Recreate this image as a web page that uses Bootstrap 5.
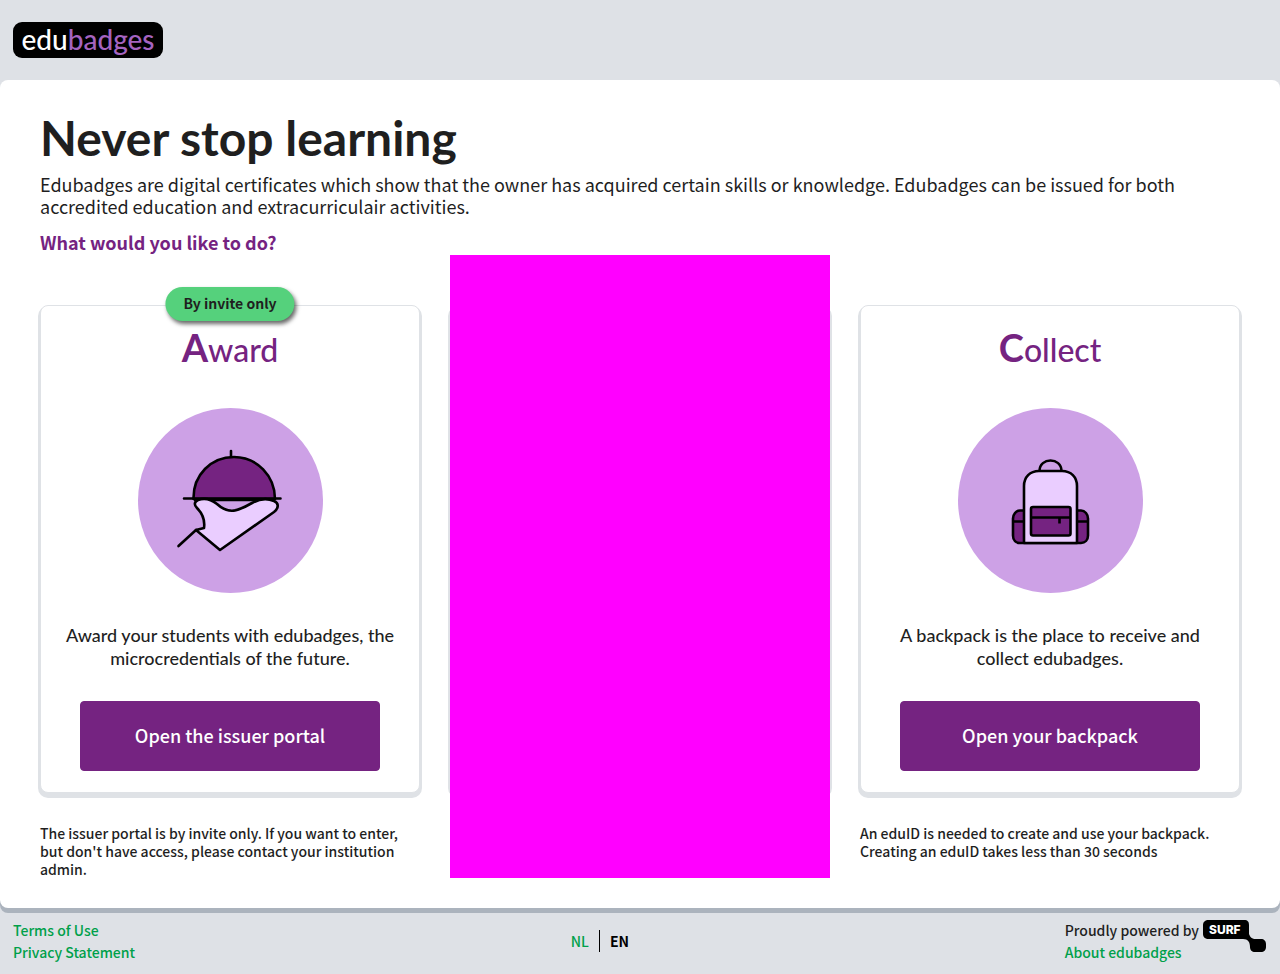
<!DOCTYPE html>
<html lang="en">
<head>
<meta charset="utf-8">
<meta name="viewport" content="width=device-width, initial-scale=1">
<title>Edubadges</title>
<link href="https://cdn.jsdelivr.net/npm/bootstrap@5.3.0/dist/css/bootstrap.min.css" rel="stylesheet">
<style>
:root { --edu-purple: #752381; --edu-line: #dfe2e6; --edu-green: #00a04a; }
body { background: #dee1e6; color: #1f1f1f; font-family: "Noto Sans CJK SC", "Open Sans", sans-serif; font-size: 14px; line-height: 22px; font-weight: 500; }
a { color: var(--edu-green); text-decoration: none; }
.top-bar { height: 80px; padding: 0 13px; }
.brand-mark { width: 150px; height: 36px; border-radius: 9px; background: #000; color: #fff; font-family: Lato, sans-serif; font-size: 28px; line-height: 34px; }
.brand-mark span { color: #a564c0; }
.sheet { border-radius: 8px; box-shadow: 0 5px 0 #abb3bd; padding: 29px 40px 30px; }
h1 { font-family: Lato, sans-serif; font-weight: 700; font-size: 48px; line-height: 58px; margin-bottom: 6px; }
.intro { font-size: 18px; line-height: 22px; font-weight: 400; margin-bottom: 14px; }
.question { font-size: 18px; line-height: 22px; font-weight: 700; color: var(--edu-purple); margin-bottom: 2px; }
.choices { --bs-gutter-x: 30px; }
.choice { position: relative; margin-top: 50px; height: 488px; border: 1px solid var(--edu-line); border-radius: 8px; box-shadow: 0 3px 0 2px var(--edu-line); background: #fff; font-family: Lato, sans-serif; padding: 17px 20px 21px; }
.invite { top: -19px; height: 34px; border-radius: 17px; padding: 5px 18px; background: #55d17c; font: 700 14px/22px "Noto Sans CJK SC", sans-serif; box-shadow: 2px 3px 4px rgba(0,0,0,.6); }
h2 { font-size: 32px; line-height: 48px; font-weight: 500; color: var(--edu-purple); margin-bottom: 34px; }
h2 span { font-size: 38px; font-weight: 700; }
.art { width: 185px; height: 185px; margin-bottom: 31px; }
.pitch { font-size: 18px; line-height: 23px; margin: 0; }
.btn-edu { --bs-btn-bg: #752381; --bs-btn-color: #fff; --bs-btn-border-color: #752381; --bs-btn-hover-bg: #5f1a69; --bs-btn-hover-color: #fff; height: 70px; margin: 0 19px; padding: 0 0 2px; font: 500 18px/24px "Noto Sans CJK SC", sans-serif; border-radius: 4px; }
.note { font-size: 14px; line-height: 18px; margin: 31px 0 0; }
.cover { background: #f0f; inset: 0 15px; }
.foot { padding: 11px 13px 9px; }
.lang a { padding: 0 10px; }
.lang a + a { border-left: 1px solid #000; color: #000; font-weight: 700; }
</style>
</head>
<body>
<header class="top-bar d-flex align-items-center">
  <a href="#" class="brand-mark d-flex justify-content-center">edu<span>badges</span></a>
</header>
<main class="sheet bg-white">
  <h1>Never stop learning</h1>
  <p class="intro">Edubadges are digital certificates which show that the owner has acquired certain skills or knowledge. Edubadges can be issued for both accredited education and extracurriculair activities.</p>
  <p class="question">What would you like to do?</p>
  <div class="row choices">
    <div class="col-4">
      <section class="choice d-flex flex-column text-center">
        <span class="invite position-absolute start-50 translate-middle-x text-nowrap">By invite only</span>
        <h2><span>A</span>ward</h2>
        <svg class="art align-self-center flex-shrink-0" viewBox="0 0 185 185" aria-hidden="true">
          <circle cx="92.500" cy="92.500" r="92.500" fill="#cda1e6"/>
          <g stroke="#000" stroke-width="2.600" stroke-linecap="round" stroke-linejoin="round">
            <path d="M93 43v6" fill="none"/>
            <path d="M55.500 91C55 67 73 49 96 49s41 19 41 42z" fill="#752381"/>
            <path d="M46 90.500h96.500M57 92h79" fill="none"/>
            <path d="M60 92c-4 2-4 5-1 8 6 6 8 13 7 20l-8 2 24 20 54-38c5-4 5-9 0-11-7-3-15-2-22 2-14 8-23 12-35 1-5-4-11-7-19-4z" fill="#eacdff"/>
            <path d="M58 122l-17.500 16" fill="none"/>
          </g>
        </svg>
        <p class="pitch">Award your students with edubadges, the microcredentials of the future.</p>
        <button type="button" class="btn btn-edu mt-auto">Open the issuer portal</button>
      </section>
      <p class="note">The issuer portal is by invite only. If you want to enter, but don't have access, please contact your institution admin.</p>
    </div>
    <div class="col-4 position-relative">
      <section class="choice"></section>
      <div class="cover position-absolute"></div>
    </div>
    <div class="col-4">
      <section class="choice d-flex flex-column text-center">
        <h2><span>C</span>ollect</h2>
        <svg class="art align-self-center flex-shrink-0" viewBox="0 0 185 185" aria-hidden="true">
          <circle cx="92.500" cy="92.500" r="92.500" fill="#cda1e6"/>
          <g stroke="#000" stroke-width="2.600" stroke-linejoin="round">
            <path d="M81.500 63c0-14 22-14 22 0" fill="none"/>
            <path d="M66 102.500h-4c-4 0-7 4-7 8v17c0 5 3 7.500 7 7.500h61c4 0 7-3 7-7.500v-17c0-4-3-8-7-8h-4z" fill="#752381"/>
            <path d="M66 135V78c0-9 6-15 15-15h23c9 0 15 6 15 15v57z" fill="#eacdff"/>
            <path d="M55 113.500h11M119 113.500h11" fill="none"/>
            <rect x="73" y="99" width="39.500" height="28.500" rx="2" fill="#752381"/>
            <path d="M73 109.500h39.500M101.500 109.500v6" fill="none"/>
          </g>
        </svg>
        <p class="pitch">A backpack is the place to receive and collect edubadges.</p>
        <button type="button" class="btn btn-edu mt-auto">Open your backpack</button>
      </section>
      <p class="note">An eduID is needed to create and use your backpack. Creating an eduID takes less than 30 seconds</p>
    </div>
  </div>
</main>
<footer class="foot d-flex justify-content-between align-items-center">
  <div class="d-flex flex-column align-items-start"><a href="#">Terms of Use</a><a href="#">Privacy Statement</a></div>
  <nav class="lang d-flex" aria-label="Language"><a href="#">NL</a><a href="#">EN</a></nav>
  <div class="d-flex align-items-start">
    <div class="d-flex flex-column align-items-start"><span>Proudly powered by</span><a href="#">About edubadges</a></div>
    <svg class="ms-1 flex-shrink-0" width="64" height="34" viewBox="0 0 64 34" role="img" aria-label="SURF">
      <path d="M6 1h35c4 0 5 2 5 5v9c1 3 3 5 7 5h5c3 0 5 2 5 5v3c0 3-2 5-5 5h-6c-3 0-5-2-5-5 0-5-2-8-7-8H6c-4 0-6-2-6-5V6c0-3 2-5 6-5z"/>
      <text x="6" y="15" fill="#fff" font-family="Inter, sans-serif" font-weight="800" font-size="12">SURF</text>
    </svg>
  </div>
</footer>
<script src="https://cdn.jsdelivr.net/npm/bootstrap@5.3.0/dist/js/bootstrap.bundle.min.js"></script>
</body>
</html>
